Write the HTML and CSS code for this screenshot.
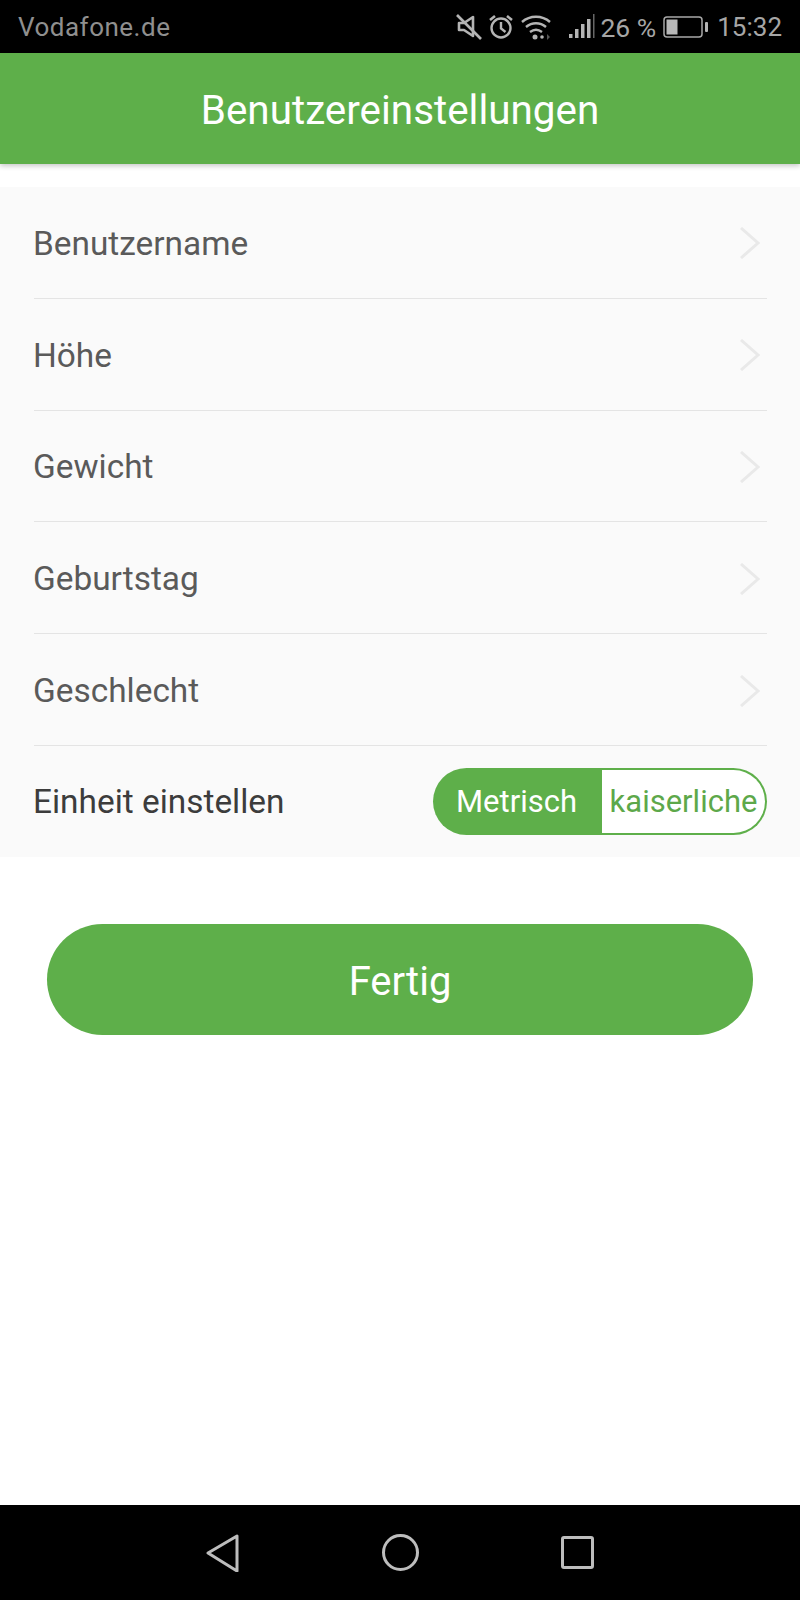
FILE: index.html
```html
<!DOCTYPE html>
<html lang="de">
<head>
<meta charset="utf-8">
<title>Benutzereinstellungen</title>
<link rel="stylesheet" href="styles.css">
</head>
<body>
<div class="screen">
  <div class="statusbar">
    <span class="carrier">Vodafone.de</span>
    <div class="status-right">
      <svg class="ic mute" width="26" height="28" viewBox="0 0 26 28" fill="none" stroke="#b4b4b4" stroke-width="2.6">
        <path d="M3 10h5l9-6v19l-9-6H3z" stroke-linejoin="round"/>
        <path d="M1 2l24 24"/>
      </svg>
      <svg class="ic alarm" width="26" height="28" viewBox="0 0 26 28" fill="none" stroke="#b4b4b4" stroke-width="2.4">
        <circle cx="13" cy="15" r="9.5"/>
        <path d="M13 9v6.5l4.500 3.500"/>
        <path d="M2 7l5-4M24 7l-5-4" stroke-width="2.6"/>
      </svg>
      <svg class="ic wifi" width="30" height="28" viewBox="0 0 30 28" fill="none" stroke="#b4b4b4" stroke-width="2.400">
        <path d="M1 9c8-7 20-7 28 0"/>
        <path d="M5 14c6-5 14-5 20 0"/>
        <path d="M9 19c4-3 8-3 12 0"/>
        <circle cx="14" cy="24" r="2.500" fill="#b4b4b4" stroke="none"/>
        <circle cx="21" cy="24" r="1.800" fill="#b4b4b4" stroke="none"/>
        <path d="M26 21l3 3-3 3z" fill="#555" stroke="none"/>
      </svg>
      <svg class="ic signal" width="28" height="28" viewBox="0 0 28 28" fill="#b4b4b4">
        <rect x="1" y="21" width="3.500" height="4"/>
        <rect x="7" y="16" width="3.500" height="9"/>
        <rect x="13" y="11" width="3.500" height="14"/>
        <rect x="19" y="6" width="3.500" height="19"/>
        <rect x="25" y="1" width="1.500" height="24" fill="#666"/>
      </svg>
      <span class="percent">26 %</span>
      <svg class="ic battery" width="46" height="24" viewBox="0 0 46 24" fill="none">
        <rect x="1" y="2" width="38" height="20" rx="3" stroke="#a8a8a8" stroke-width="1.500"/>
        <rect x="3.500" y="4.500" width="11" height="15" fill="#b8b8b8"/>
        <rect x="42" y="7" width="3" height="10" rx="1" fill="#b4b4b4"/>
      </svg>
      <span class="clock">15:32</span>
    </div>
  </div>

  <header class="appbar">Benutzereinstellungen</header>

  <main class="content">
    <section class="settings">
      <div class="row"><span class="label">Benutzername</span><svg class="chevron" width="22" height="32" viewBox="0 0 22 32"><path d="M2 1l17 15L2 31"/></svg></div>
      <div class="row"><span class="label">Höhe</span><svg class="chevron" width="22" height="32" viewBox="0 0 22 32"><path d="M2 1l17 15L2 31"/></svg></div>
      <div class="row"><span class="label">Gewicht</span><svg class="chevron" width="22" height="32" viewBox="0 0 22 32"><path d="M2 1l17 15L2 31"/></svg></div>
      <div class="row"><span class="label">Geburtstag</span><svg class="chevron" width="22" height="32" viewBox="0 0 22 32"><path d="M2 1l17 15L2 31"/></svg></div>
      <div class="row"><span class="label">Geschlecht</span><svg class="chevron" width="22" height="32" viewBox="0 0 22 32"><path d="M2 1l17 15L2 31"/></svg></div>
      <div class="row row-unit">
        <span class="label">Einheit einstellen</span>
        <div class="toggle">
          <span class="opt opt-on">Metrisch</span>
          <span class="opt opt-off">kaiserliche</span>
        </div>
      </div>
    </section>
    <button class="done" type="button">Fertig</button>
  </main>

  <nav class="navbar">
    <svg width="33" height="38" viewBox="0 0 33 38" fill="none" stroke="#bdbdbd" stroke-width="3" stroke-linejoin="round"><path d="M2 19L31 2v35z"/></svg>
    <svg width="37" height="37" viewBox="0 0 37 37" fill="none" stroke="#bdbdbd" stroke-width="3"><circle cx="18.500" cy="18.500" r="17"/></svg>
    <svg width="33" height="33" viewBox="0 0 33 33" fill="none" stroke="#bdbdbd" stroke-width="3" stroke-linejoin="round"><rect x="1.500" y="1.500" width="30" height="30" rx="1.500"/></svg>
  </nav>
</div>
</body>
</html>
```

FILE: styles.css
```css
* { box-sizing: border-box; }

html, body {
  margin: 0;
  padding: 0;
  background: #fff;
}

.screen {
  width: 800px;
  height: 1600px;
  display: flex;
  flex-direction: column;
  font-family: Roboto, "Liberation Sans", sans-serif;
  overflow: hidden;
}

/* system status bar */
.statusbar {
  height: 53px;
  flex: none;
  background: #000;
  color: #a6a6a6;
  display: flex;
  align-items: center;
  justify-content: space-between;
  padding: 1px 18px 0;
  font-size: 26px;
}

.carrier { color: #8f8f8f; letter-spacing: 0.5px; }

.status-right {
  display: flex;
  align-items: center;
}

.percent { font-size: 26.5px; }

.ic { display: block; flex: none; }
.mute { margin-right: 6px; }
.alarm { margin-right: 7px; }
.wifi { margin-right: 17px; }
.signal { margin-right: 4px; }
.battery { margin-left: 7px; margin-right: 8px; }

/* title bar */
.appbar {
  height: 111px;
  flex: none;
  padding-top: 4px;
  background: #5eaf4a;
  color: #fff;
  font-size: 40.4px;
  display: flex;
  align-items: center;
  justify-content: center;
  box-shadow: 0 2px 5px rgba(0, 0, 0, 0.22);
  position: relative;
}

.content {
  flex: 1;
  padding-top: 23px;
  display: flex;
  flex-direction: column;
}

/* settings list */
.settings {
  background: #fafafa;
  padding: 0 33px 0 34px;
}

.row {
  height: 111.8px;
  display: flex;
  align-items: center;
  justify-content: space-between;
  border-bottom: 1px solid #e4e4e4;
  color: #5a5a5a;
  font-size: 33.4px;
  padding-right: 6px;
}

.label {
  margin-left: -1px;
  padding-top: 2px;
}

.chevron {
  margin-top: 2px;
  fill: none;
  stroke: #e9e9e9;
  stroke-width: 3;
}

.row-unit {
  height: 111px;
  border-bottom: 0;
  color: #3c3c3c;
  padding-right: 0;
}

.row-unit .label { padding-top: 0; }

.toggle {
  width: 334px;
  height: 67px;
  display: flex;
  padding: 2px 2px 2px 0;
  border-radius: 34px;
  background: #5eaf4a;
  font-size: 31px;
}

.opt {
  display: flex;
  align-items: center;
  justify-content: center;
}

.opt-on {
  width: 169px;
  padding-right: 2px;
  color: #fff;
}

.opt-off {
  flex: 1;
  background: #fff;
  border-radius: 0 32px 32px 0;
  color: #5da84a;
}

/* primary action */
.done {
  display: block;
  width: 706px;
  height: 111px;
  margin: 67px 0 0 47px;
  padding: 4px 0 0;
  border: 0;
  border-radius: 56px;
  background: #5eaf4a;
  color: #fff;
  font: 400 40px Roboto, "Liberation Sans", sans-serif;
}

/* system navigation bar */
.navbar {
  height: 95px;
  flex: none;
  background: #000;
  display: flex;
  align-items: center;
  justify-content: space-between;
  padding: 0 206px;
}
```
